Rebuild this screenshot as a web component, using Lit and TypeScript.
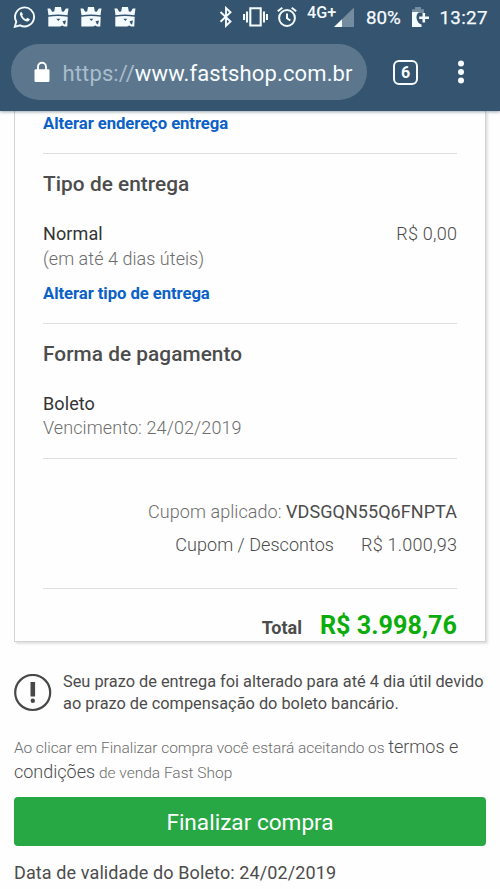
import { LitElement, html, css, svg } from "lit";
import { customElement, property } from "lit/decorators.js";

@customElement("status-bar")
class StatusBar extends LitElement {
  static styles = css`
    :host { display: flex; height: 34px; padding-left: 13px; box-sizing: border-box; color: #f4fbff; font: 400 18.8px/36px Roboto, sans-serif; -webkit-text-stroke: .25px #f4fbff; white-space: nowrap; }
    svg { display: block; flex: none; margin-top: 6px; height: 22px; }
    .wa { width: 23px; margin-right: 11px; }
    .crown { width: 22px; margin-right: 11.3px; }
    .bt { width: 14px; margin-left: 72.1px; }
    .vib { width: 25px; margin-left: 10px; }
    .alarm { width: 20px; margin-left: 9px; }
    .net { width: 29px; margin-left: 10px; font-size: 16.2px; font-weight: 500; line-height: 25px; -webkit-text-stroke: 0; }
    .signal { width: 20px; margin-left: -2px; }
    .pct { width: 37px; margin-left: 12px; }
    .bat { width: 18px; margin-left: 9px; }
    .time { margin-left: 9.5px; letter-spacing: .3px; }
  `;
  crown() {
    return html`<svg class="crown" viewBox="0 0 22 22" fill="#f4fbff">
      <path d="M.5 2.500 3.200 2.500 5.200 5.800 7.200 5.500 8 1H14L14.800 5.500 16.800 5.800 18.800 2.500 21.500 2.500 20.500 9.300Q11 7.500 1.500 9.300Z"/>
      <path d="M1.300 10.800Q11 9 20.700 10.800L20.300 20.500H17L15.500 19.500 13 20.500H1.300Z"/>
      <path d="M9.300 12.800H13.300L11.400 15ZM15.500 15.300 19 14.500 18 18.500 16.800 18Z" fill="#34546f"/>
    </svg>`;
  }
  render() {
    return html`
      <svg class="wa" viewBox="0 0 23 22" fill="none" stroke="#f4fbff" stroke-width="1.9">
        <path d="M1.800 20.800 3.300 15.600A9.500 9.500 0 1 1 7.100 19.300Z"/>
        <path d="M8.200 5.800Q6 7.200 7.500 10 9.500 14.200 13.500 15.500 16 16 17 13.200L14.300 11.700 13 13.200Q10.300 12 9.200 9.400L10 8.200Z" fill="#f4fbff" stroke="none"/>
      </svg>
      ${[0, 1, 2].map(() => this.crown())}
      <svg class="bt" viewBox="0 0 14 22" fill="none" stroke="#f4fbff" stroke-width="1.900"><path d="M1.500 6 11.500 15.500 7 19.700V2L11.500 6.200 1.500 15.700"/></svg>
      <svg class="vib" viewBox="0 0 25 22" fill="none" stroke="#f4fbff" stroke-width="2.100"><path d="M7.300 2.200h10.400v17.300H7.300ZM4 5.500v11M21 5.500v11M1 8v6M24 8v6"/></svg>
      <svg class="alarm" viewBox="0 0 20 22" fill="none" stroke="#f4fbff" stroke-width="2"><circle cx="10" cy="12" r="7.900"/><path d="M10 7.500V12.300l3.300 2.200M.8 5.300 5.300 1.700M14.700 1.700 19.200 5.300"/></svg>
      <span class="net">4G+</span>
      <svg class="signal" viewBox="0 0 20 22"><path d="M20 1.500V21H0Z" fill="#738ca0"/><path d="M8 13.200V21H0Z" fill="#f4fbff"/></svg>
      <span class="pct">80%</span>
      <svg class="bat" viewBox="0 0 18 22"><path d="M0 3.200H3V1H9V3.200H12V7H0Z" fill="#738ca0"/><path d="M0 6H7Q4.200 8 4.500 12 5.500 17.500 9.500 18.500V21H0Z" fill="#f4fbff"/><path d="M11.800 7v9.500M7.200 11.700h9.800" stroke="#f4fbff" stroke-width="2.600"/></svg>
      <span class="time">13:27</span>`;
  }
}

@customElement("browser-bar")
class BrowserBar extends LitElement {
  @property() host = "www.fastshop.com.br";
  static styles = css`
    :host { display: flex; align-items: center; height: 56px; margin: 10px 0 11px 11px; font-family: Roboto, sans-serif; }
    .pill { display: flex; align-items: center; width: 356px; height: 56px; box-sizing: border-box; padding: 3px 0 0 23px; border-radius: 28px; background: #5c778d; color: #f8fcff; font-size: 22px; font-weight: 400; letter-spacing: .13px; white-space: nowrap; }
    .lock { width: 16px; height: 22px; margin: -3px 12.5px 0 0; }
    .scheme { color: #a9bdcd; }
    .tabs { width: 25px; height: 25px; box-sizing: border-box; border: 2.500px solid #f8fcff; border-radius: 6px; margin-left: 26px; color: #f8fcff; font: 700 16px/21px Roboto, sans-serif; text-align: center; }
    .more { width: 8px; height: 26px; margin-left: 39px; }
  `;
  render() {
    return html`
      <div class="pill">
        <svg class="lock" viewBox="0 0 16 22"><rect x=".5" y="8.200" width="15" height="12.800" rx="1.300" fill="#fff"/><path d="M4 9V5.800a4 4 0 0 1 8 0V9" fill="none" stroke="#fff" stroke-width="1.900"/></svg>
        <span><span class="scheme">https://</span>${this.host}</span>
      </div>
      <div class="tabs">6</div>
      <svg class="more" viewBox="0 0 8 26" fill="#f8fcff">${[4.5, 13, 21.5].map((y) => svg`<circle cx="4" cy=${y} r="3"/>`)}</svg>`;
  }
}

@customElement("app-root")
class AppRoot extends LitElement {
  static styles = css`
    :host { display: block; height: 889px; overflow: hidden; background: #fefefe; color: #4c4c4c; font: 300 18px/24px Roboto, sans-serif; white-space: nowrap; }
    header { position: relative; height: 111px; background: #34546f; box-shadow: 0 1px 3px rgba(40, 60, 80, .45); }
    .card { width: 472px; height: 531px; margin-left: 14px; box-sizing: border-box; padding: 1px 28px 0; border: 1px solid #d2d2d2; border-top: 0; box-shadow: 2px 2px 2px #e2e2e2; }
    .link { color: #0b61c7; font-weight: 700; font-size: 16.700px; letter-spacing: -.07px; }
    hr { height: 1px; margin: 17px 0 16px; border: 0; background: #dedede; }
    h2 { margin: 0 0 24px; font-size: 20.800px; line-height: 28px; font-weight: 500; letter-spacing: .05px; }
    .row { display: flex; justify-content: space-between; }
    .name { font-weight: 400; color: #333; letter-spacing: .1px; }
    .muted { color: #6d6d6d; }
    .value { letter-spacing: .25px; margin-right: -.25px; }
    .sub { margin-top: 1px; letter-spacing: .05px; }
    .type { margin-top: 11px; }
    .due { margin-top: -.5px; letter-spacing: .1px; }
    .before-coupon { margin: 18.500px 0 41px; }
    .right { text-align: right; letter-spacing: .06px; }
    .code { font-weight: 400; }
    .discount { display: flex; justify-content: flex-end; gap: 27px; margin-top: 8.500px; letter-spacing: .05px; }
    .before-total { margin: 31.500px 0 22px; }
    .total { display: flex; justify-content: flex-end; align-items: baseline; line-height: 30px; gap: 18px; font-weight: 700; }
    .price { font-size: 25.200px; color: #0aad0a; }
    .notice { display: flex; gap: 11px; margin: 29px 14px 0; font-weight: 400; font-size: 16.330px; line-height: 21.500px; }
    .alert { flex: none; width: 38px; height: 38px; margin-top: 2.500px; }
    .terms { margin: 20.800px 14px 0; font-size: 15.500px; color: #6d6d6d; }
    .terms .intro { letter-spacing: -.065px; }
    .terms a { font-size: 18px; color: #4c4c4c; }
    button { display: block; width: 472px; height: 49px; margin: 12.500px 14px 14.500px; padding: 0; border: 0; border-radius: 4px; background: #28a745; color: #fff; font: 400 22.600px/49px Roboto, sans-serif; }
    .caption { display: block; padding-top: 2px; line-height: 47px; }
    .validity { margin-left: 14px; font-weight: 400; letter-spacing: .11px; }
  `;
  render() {
    return html`
      <header><status-bar></status-bar><browser-bar></browser-bar></header>
      <div class="card">
        <div class="link">Alterar endereço entrega</div>
        <hr>
        <h2>Tipo de entrega</h2>
        <div class="row"><span class="name">Normal</span><span class="value">R$ 0,00</span></div>
        <div class="muted sub">(em até 4 dias úteis)</div>
        <div class="link type">Alterar tipo de entrega</div>
        <hr>
        <h2>Forma de pagamento</h2>
        <div class="name">Boleto</div>
        <div class="muted due">Vencimento: 24/02/2019</div>
        <hr class="before-coupon">
        <div class="right"><span class="muted">Cupom aplicado: </span><span class="code">VDSGQN55Q6FNPTA</span></div>
        <div class="discount"><span>Cupom / Descontos</span><span class="value">R$ 1.000,93</span></div>
        <hr class="before-total">
        <div class="total"><span>Total</span><span class="price">R$ 3.998,76</span></div>
      </div>
      <div class="notice">
        <svg class="alert" viewBox="0 0 38 38"><circle cx="18.700" cy="18.500" r="17.500" fill="none" stroke="#484848" stroke-width="2.200"/><path d="M16.500 8h4.600v14.500h-4.600Z" fill="#484848"/><circle cx="18.800" cy="26.800" r="2.200" fill="#484848"/></svg>
        <div>Seu prazo de entrega foi alterado para até 4 dia útil devido<br>ao prazo de compensação do boleto bancário.</div>
      </div>
      <div class="terms"><span class="intro">Ao clicar em Finalizar compra você estará aceitando os </span><a>termos e<br>condições</a> de venda Fast Shop</div>
      <button><span class="caption">Finalizar compra</span></button>
      <div class="validity">Data de validade do Boleto: 24/02/2019</div>`;
  }
}
